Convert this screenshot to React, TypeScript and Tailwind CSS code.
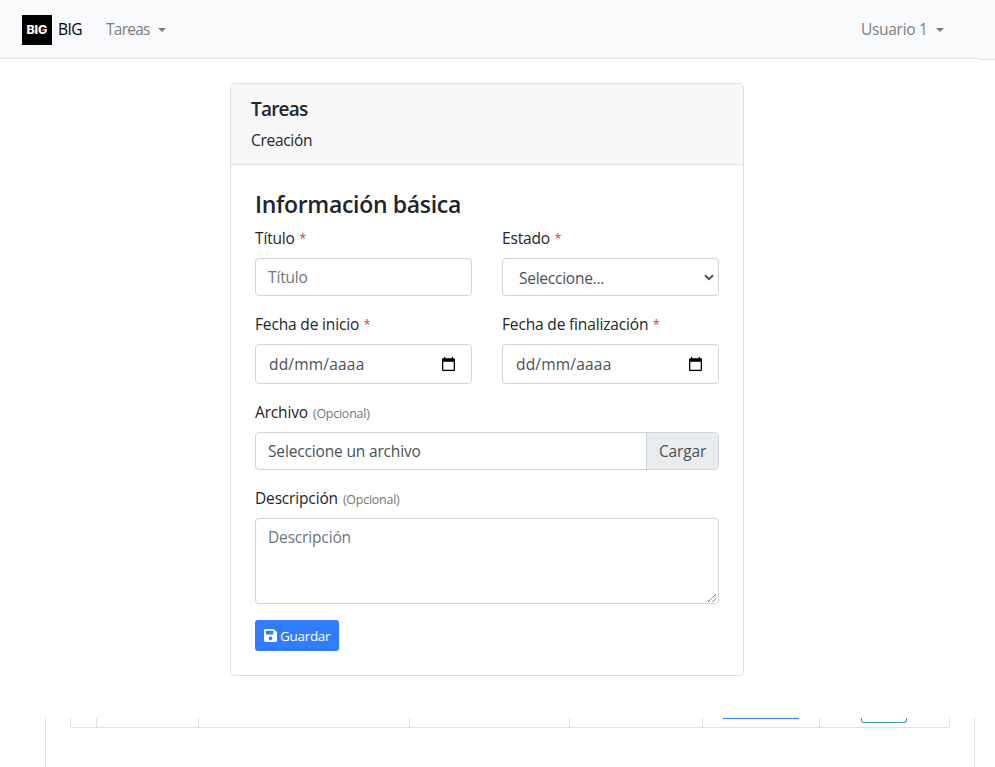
import type { ReactNode } from "react";

function Caret() {
  return (
    <span className="h-0 w-0 border-x-[4.5px] border-t-[4.5px] border-x-transparent border-t-[#7a7b7b]" />
  );
}

function Logo() {
  return (
    <svg width="30" height="30" viewBox="0 0 30 30" className="block">
      <rect width="30" height="30" fill="#000" />
      <text
        x="4.600"
        y="18.800"
        fontFamily="Inter, sans-serif"
        fontSize="11.500"
        fontWeight="800"
        fill="#fff"
        textLength="20.500"
        lengthAdjust="spacingAndGlyphs"
      >
        BIG
      </text>
      <circle cx="21.200" cy="14.900" r="1.400" fill="#b8404a" />
    </svg>
  );
}

function CalendarIcon() {
  return (
    <svg width="13" height="14" viewBox="0 0 13 14" className="block">
      <path
        fill="#000"
        fillRule="evenodd"
        d="M2 0h1.3v1.2h6.4V0H11v1.2h1q1 0 1 1V13q0 1-1 1H1q-1 0-1-1V2.2q0-1 1-1h1zM1.3 4.8v7.9h10.4V4.8z"
      />
    </svg>
  );
}

function SaveIcon() {
  return (
    <svg width="13" height="13" viewBox="0 0 448 448" className="block">
      <path
        fill="#fff"
        d="M433.941 97.941l-83.882-83.882A48 48 0 0 0 316.118 0H48C21.490 0 0 21.490 0 48v352c0 26.510 21.490 48 48 48h352c26.510 0 48-21.490 48-48V131.882a48 48 0 0 0-14.059-33.941zM224 384c-35.346 0-64-28.654-64-64 0-35.346 28.654-64 64-64s64 28.654 64 64c0 35.346-28.654 64-64 64zm96-304.520V180c0 6.627-5.373 12-12 12H76c-6.627 0-12-5.373-12-12V76c0-6.627 5.373-12 12-12h228.520c3.183 0 6.235 1.264 8.485 3.515l3.480 3.480A11.996 11.996 0 0 1 320 79.480z"
      />
    </svg>
  );
}

function Label({ text, required = false }: { text: ReactNode; required?: boolean }) {
  return (
    <div className="flex h-6 items-baseline whitespace-pre leading-6">
      <span>{text}</span>
      {required ? (
        <span className="ml-[4.5px] -translate-y-px text-[13px] text-[#dc3545]">*</span>
      ) : (
        <span className="ml-[5px] text-[12.4px] tracking-[-0.2px] text-[#6c757d]">(Opcional)</span>
      )}
    </div>
  );
}

function DateField() {
  return (
    <div className="mt-2 flex h-10 items-center justify-between rounded-[4px] border border-[#ced4da] pr-4 pl-[13px] text-[#495057]">
      <span className="pt-[2px] tracking-[0.2px]">dd/mm/aaaa</span>
      <CalendarIcon />
    </div>
  );
}

export default function App() {
  return (
    <div className="flex h-[767px] w-[995px] flex-col overflow-hidden bg-white font-['Open_Sans','Noto_Sans',sans-serif] text-[15.5px] tracking-[-0.16px] text-[#212529]">
      <nav className="flex shrink-0 items-start">
        <div className="flex h-[59px] w-[979px] items-center border-b border-[#dee2e6] bg-[#f8f9fa] pl-[22px] pt-px">
          <Logo />
          <span className="ml-[6px] w-12 pt-px tracking-[-0.5px] text-black">BIG</span>
          <span className="w-[52px] pt-px tracking-[-0.75px] text-[#7e7f80]">Tareas</span>
          <Caret />
          <div className="ml-auto flex items-center pr-[35px]">
            <span className="w-[75px] pt-px tracking-[-0.3px] text-[#7e7f80]">Usuario 1</span>
            <Caret />
          </div>
        </div>
        <div className="h-[60px] w-4 border-b border-[#dee2e6] bg-[#f8f9fa]" />
      </nav>

      <main className="mt-[23px] ml-[230px] flex h-[593px] w-[514px] shrink-0 flex-col rounded-[4px] border border-[#dfdfdf]">
        <header className="h-[81px] border-b border-[#dfdfdf] bg-[#f7f7f7] px-5 pt-[13px]">
          <h1 className="text-[19px] leading-6 font-semibold tracking-[-0.8px]">Tareas</h1>
          <p className="mt-[7px] leading-6 tracking-[-0.3px]">Creación</p>
        </header>

        <div className="flex flex-col items-stretch px-6 pt-6">
          <h2 className="h-[37px] text-[23px] leading-[30px] font-semibold tracking-[-0.32px]">Información básica</h2>

          <div className="grid grid-cols-2 gap-x-[30px]">
            <div>
              <Label text="Título" required />
              <div className="mt-2 flex h-[38px] items-center rounded-[4px] border border-[#ced4da] px-3 pt-[2px] text-[#6c757d]">
                Título
              </div>
            </div>
            <div>
              <Label text="Estado" required />
              <div className="mt-2 flex h-[38px] items-center justify-between rounded-[4px] border border-[#ced4da] pr-1 pl-4 text-[#495057]">
                <span className="pt-[3px] tracking-[-0.25px]">Seleccione...</span>
                <svg width="10" height="7" viewBox="0 0 10 7">
                  <path d="M1 1.2l4 4 4-4" fill="none" stroke="#495057" strokeWidth="2" />
                </svg>
              </div>
            </div>
          </div>

          <div className="mt-4 grid grid-cols-2 gap-x-[30px]">
            <div>
              <Label text="Fecha de inicio" required />
              <DateField />
            </div>
            <div>
              <Label text="Fecha de finalización" required />
              <DateField />
            </div>
          </div>

          <div className="mt-4">
            <Label text="Archivo" />
            <div className="mt-2 flex h-[38px] overflow-hidden rounded-[4px] border border-[#ced4da] leading-9 text-[#495057]">
              <span className="flex-1 pl-3">Seleccione un archivo</span>
              <span className="w-[72px] border-l border-[#ced4da] bg-[#e9ecef] pl-3">Cargar</span>
            </div>
          </div>

          <div className="mt-4">
            <Label text="Descripción" />
            <div className="mt-2 flex h-[86px] items-start justify-between rounded-[4px] border border-[#ced4da] pl-3 text-[#6c757d]">
              <span className="pt-[6px] leading-6">Descripción</span>
              <svg width="10" height="10" viewBox="0 0 10 10" className="mr-px self-end">
                <path d="M1 9L9 1M5.500 9L9 5.500" stroke="#444" strokeWidth="1" strokeDasharray="1.2 0.5" fill="none" />
              </svg>
            </div>
          </div>

          <button className="mt-4 flex h-[31px] w-[84px] items-center rounded-[3px] bg-[#2f7cff] pl-[9px] text-[13.5px] tracking-[-0.3px] text-white">
            <SaveIcon />
            <span className="ml-[3px] pt-px">Guardar</span>
          </button>
        </div>
      </main>

      <section className="mt-[42px] ml-[45px] h-[49px] w-[930px] shrink-0 border-x border-[#dee2e6] px-6">
        <div className="flex h-[10px] border-x border-b border-[#dee2e6]">
          <div className="w-[26px] border-r border-[#dee2e6]" />
          <div className="w-[102px] border-r border-[#dee2e6]" />
          <div className="w-[211px] border-r border-[#dee2e6]" />
          <div className="w-[160px] border-r border-[#dee2e6]" />
          <div className="w-[133px] border-r border-[#dee2e6]" />
          <div className="w-[117px] border-r border-[#dee2e6] pl-5">
            <div className="h-px w-[76px] bg-[#2f7cff]" />
          </div>
          <div className="flex-1 pl-[41px]">
            <div className="h-[5px] w-[46px] rounded-b-[3px] border-x border-b border-[#3ba2b3]" />
          </div>
        </div>
      </section>
    </div>
  );
}
